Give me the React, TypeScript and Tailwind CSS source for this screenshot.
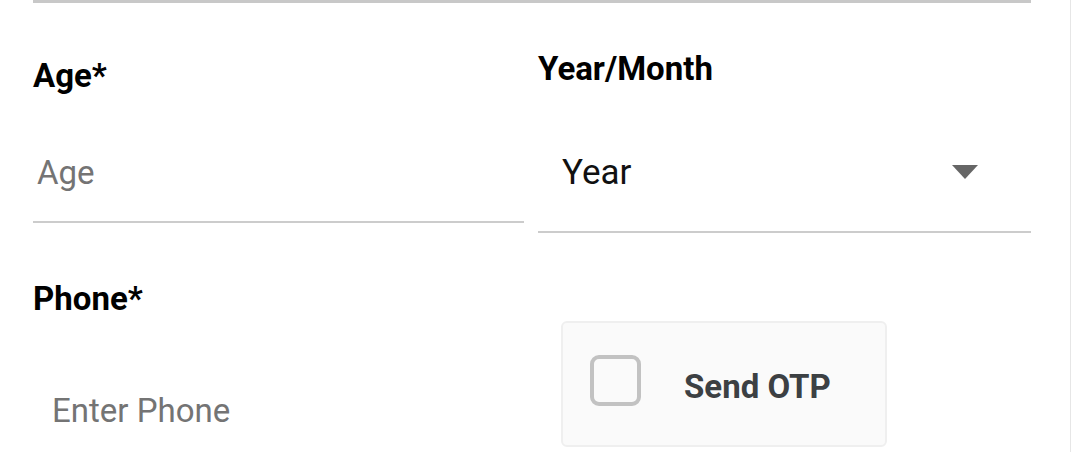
export default function App() {
  return (
    <div className="w-[1071px] h-[452px] overflow-hidden bg-white border-r border-[#e6e6e6] font-[Roboto,sans-serif]">
      <div className="pl-[33px]">
        {/* top divider left over from the field above */}
        <div className="w-[998px] h-[3px] bg-[#c8c8c8]" />

        {/* Age + Year/Month */}
        <div className="grid grid-cols-[491px_493px] gap-x-[14px]">
          <div>
            <label className="block mt-[56px] text-[33px] leading-[33px] font-bold text-black">
              Age*
            </label>
            <div className="mt-[48px] h-[83px] border-b-2 border-[#cccccc] pl-[4px] pt-[16px]">
              <span className="block text-[33px] leading-[33px] text-[#747474]">Age</span>
            </div>
          </div>

          <div>
            <label className="block mt-[49px] text-[33px] leading-[33px] font-bold text-black">
              Year/Month
            </label>
            <div className="mt-[55px] h-[93px] border-b-2 border-[#cccccc] pl-[24px] pr-[53px] pt-[15px] flex items-start justify-between">
              <span className="text-[35px] leading-[35px] text-[#111111]">Year</span>
              <svg className="mt-[10px]" width="26" height="14" viewBox="0 0 26 14">
                <path d="M0 0 H26 L13 14 Z" fill="#666666" />
              </svg>
            </div>
          </div>
        </div>

        {/* Phone + Send OTP */}
        <div className="grid grid-cols-[491px_493px] gap-x-[14px]">
          <div>
            <label className="block mt-[49px] text-[33px] leading-[33px] font-bold text-black">
              Phone*
            </label>
            <span className="block mt-[79px] pl-[19px] text-[33px] leading-[33px] text-[#747474]">
              Enter Phone
            </span>
          </div>

          <div>
            <div className="ml-[23px] mt-[88px] w-[326px] h-[126px] rounded-[6px] border-2 border-[#efefef] bg-[#fafafa] flex items-start">
              <span className="ml-[27px] mt-[32px] w-[51px] h-[51px] rounded-[9px] border-4 border-[#c2c2c2]" />
              <span className="ml-[43px] mt-[47px] text-[33px] leading-[33px] font-bold text-[#3c4043]">
                Send OTP
              </span>
            </div>
          </div>
        </div>
      </div>
    </div>
  );
}
